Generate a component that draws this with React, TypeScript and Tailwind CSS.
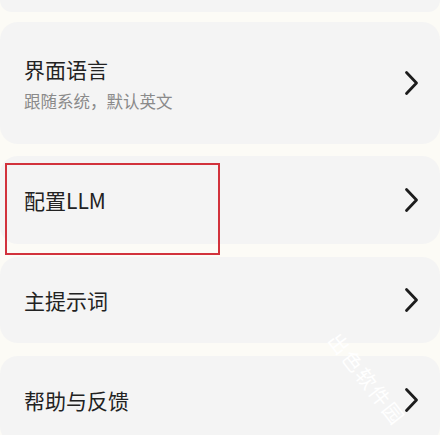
import { ReactNode } from "react";

function Chevron() {
  return (
    <svg width="16" height="26" viewBox="0 0 16 26" fill="none" className="shrink-0">
      <path d="M3.5 2.5 L13.5 13 L3.5 23.5" stroke="#1c1c1c" strokeWidth="2.8" strokeLinecap="round" strokeLinejoin="round" />
    </svg>
  );
}

function Row({ title, sub, className }: { title: string; sub?: string; className: string }) {
  return (
    <div className={`flex items-center justify-between rounded-[18px] bg-[#f4f4f4] pl-[24px] pr-[21px] ${className}`}>
      <div className="flex flex-col">
        <span className="text-[21px] leading-[28px] text-[#222]">{title}</span>
        {sub && <span className="mt-[7px] text-[16.5px] leading-[22px] text-[#8a8a8a]">{sub}</span>}
      </div>
      <Chevron />
    </div>
  );
}

export default function App() {
  const overlay: ReactNode = (
    <>
      {/* annotation box */}
      <div className="absolute left-[5px] top-[163px] h-[92px] w-[215px] border-2 border-[#d2323c]" />
      {/* watermark */}
      <div className="absolute left-[312px] top-[364px] rotate-[52deg] text-[20px] tracking-[2px] text-white">
        出色软件园
      </div>
    </>
  );

  return (
    <div
      className="relative h-[435px] w-[440px] overflow-hidden bg-[#fcfbf6]"
      style={{ fontFamily: '"Noto Sans CJK SC", "Noto Sans", sans-serif' }}
    >
      <div className="flex flex-col">
        <div className="h-[12px] rounded-b-[18px] bg-[#f4f4f4]" />
        <Row title="界面语言" sub="跟随系统，默认英文" className="mt-[10px] h-[122px]" />
        <Row title="配置LLM" className="mt-[12px] h-[88px]" />
        <Row title="主提示词" className="mt-[13px] h-[86px]" />
        <Row title="帮助与反馈" className="mt-[13px] h-[88px]" />
      </div>
      {overlay}
    </div>
  );
}
